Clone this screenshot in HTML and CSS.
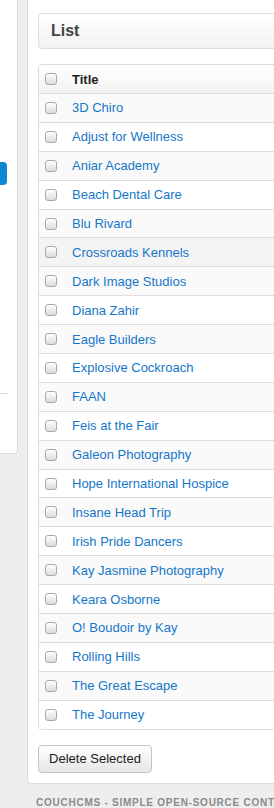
FILE: index.html
```html
<!DOCTYPE html>
<html>
<head>
    <title>CouchCMS - List</title>
    <link rel="stylesheet" href="styles.css">
</head>
<body>
    <div class="page">
        <div class="sidebar">
            <a class="side-button" href="#"></a>
            <hr class="side-rule">
        </div>

        <div class="main">
            <div class="card">
                <div class="box-head">List</div>

                <div class="list-table">
                    <div class="row head">
                        <span class="check"></span>
                        <span class="title">Title</span>
                    </div>
                    <div id="rows"></div>
                </div>

                <button class="btn">Delete Selected</button>
            </div>

            <div class="footer">CouchCMS - Simple Open-Source Content Management</div>
        </div>
    </div>

    <script>
        // Page titles
        const pages = [
            '3D Chiro', 'Adjust for Wellness', 'Aniar Academy', 'Beach Dental Care',
            'Blu Rivard', 'Crossroads Kennels', 'Dark Image Studios', 'Diana Zahir',
            'Eagle Builders', 'Explosive Cockroach', 'FAAN', 'Feis at the Fair',
            'Galeon Photography', 'Hope International Hospice', 'Insane Head Trip',
            'Irish Pride Dancers', 'Kay Jasmine Photography', 'Keara Osborne',
            'O! Boudoir by Kay', 'Rolling Hills', 'The Great Escape', 'The Journey'
        ];

        document.getElementById('rows').innerHTML = pages.map((name, i) => `
            <div class="row${i % 2 === 0 ? ' odd' : ''}${i === 5 ? ' hover' : ''}">
                <span class="check"></span>
                <a class="title" href="#">${name}</a>
            </div>
        `).join('');
    </script>
</body>
</html>
```

FILE: styles.css
```css
body {
    margin: 0;
    background: #eeeeee;
    font-family: "Liberation Sans", Arial, sans-serif;
    font-size: 13px;
    color: #333;
    overflow: hidden;
}
.page {
    display: flex;
    align-items: flex-start;
    gap: 9px;
    width: 900px;
}
.sidebar {
    width: 7px;
    padding: 162px 10px 0 0;
    height: 291px;
    background: #fff;
    border-right: 1px solid #dcdcdc;
    border-bottom: 1px solid #dcdcdc;
    border-bottom-right-radius: 4px;
}
.side-button {
    display: block;
    height: 23px;
    background: #0a88d2;
    border-radius: 0 4px 4px 0;
}
.side-rule {
    margin: 208px -1px 0 0;
    border: none;
    border-top: 1px solid #dddddd;
}
.main {
    width: 560px;
}
.card {
    background: #fff;
    border: 1px solid #dcdcdc;
    border-top: none;
    border-radius: 0 0 4px 4px;
    padding: 13px 10px 10px 10px;
}
.box-head {
    height: 34px;
    line-height: 34px;
    padding-left: 12px;
    border: 1px solid #dddddd;
    border-radius: 4px;
    background: linear-gradient(#ffffff, #f2f2f2);
    font-size: 16px;
    font-weight: bold;
    color: #444;
}
.list-table {
    margin-top: 15px;
    border: 1px solid #dddddd;
    border-radius: 4px;
    overflow: hidden;
}
.row {
    display: flex;
    align-items: center;
    height: 27.9px;
    border-top: 1px solid #dddddd;
}
.row.head {
    border-top: none;
    height: 28px;
    background: linear-gradient(#ffffff, #f3f3f3);
}
.row.odd {
    background: #fafafa;
}
.row.hover {
    background: #f4f4f4;
}
.check {
    width: 10px;
    height: 10px;
    margin-left: 6px;
    border: 1px solid #a9a9a9;
    border-radius: 3px;
    background: linear-gradient(#ffffff, #dcdcdc);
}
.title {
    margin-left: 15px;
    color: #1577c9;
    text-decoration: none;
}
.head .title {
    font-weight: bold;
    color: #222;
}
.btn {
    margin-top: 15px;
    height: 28px;
    width: 114px;
    padding: 0;
    border: 1px solid #c4c4c4;
    border-radius: 4px;
    background: linear-gradient(#ffffff, #e6e6e6);
    font-family: "Liberation Sans", Arial, sans-serif;
    font-size: 13px;
    color: #222;
}
.footer {
    margin-top: 13px;
    padding-left: 9px;
    white-space: nowrap;
    text-transform: uppercase;
    font-size: 10px;
    font-weight: bold;
    letter-spacing: 0.75px;
    color: #8a8a8a;
}
```
